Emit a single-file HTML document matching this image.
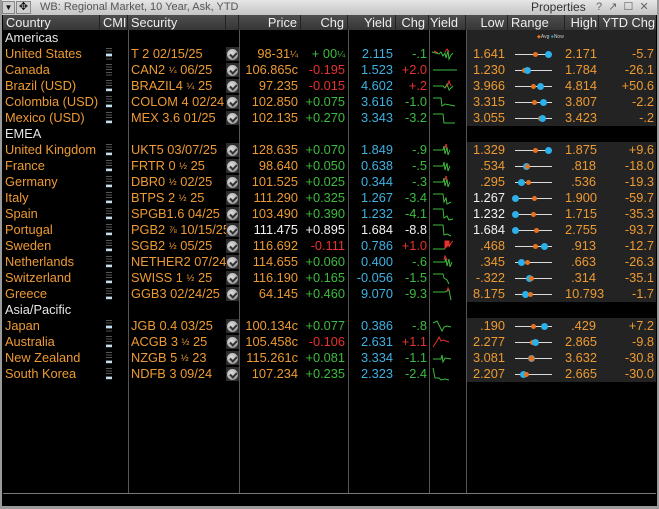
<!DOCTYPE html>
<html><head><meta charset="utf-8"><style>
*{margin:0;padding:0;box-sizing:border-box}
body{width:659px;height:509px;background:#000;overflow:hidden;position:relative;font-family:"Liberation Sans",sans-serif;font-size:12.8px}
.frame{position:absolute;left:0;top:0;width:659px;height:509px;border:2px solid #9a9a9a;border-top:0}
.title{position:absolute;left:0;top:0;width:659px;height:15px;background:linear-gradient(#e6e6e6,#c4c4c4);color:#555;font-size:11px;line-height:15px}
.title .b1{position:absolute;left:2px;top:1px;width:13px;height:13px;background:#cfcfcf;border:1px solid #888;font-size:8px;text-align:center;line-height:11px;color:#111}
.title .b2{position:absolute;left:16px;top:1px;width:15px;height:13px;background:#cfcfcf;border:1px solid #888;font-size:11px;text-align:center;line-height:11px;color:#111}
.hdr{position:absolute;left:3px;top:15px;width:653px;height:15px;background:linear-gradient(#4e4e4e,#363636);}
.h{position:absolute;top:0;height:15px;line-height:15px;color:#eee;border-right:1px solid #222;padding:0 3px;white-space:nowrap}
.r{text-align:right}
.vl{position:absolute;top:30px;height:463px;width:1px;background:#555}
.panel{position:absolute;left:467px;width:189px;background:#232323}
.row{position:absolute;left:3px;width:653px;height:16px;line-height:16px}
.c{position:absolute;top:0;height:16px;white-space:nowrap}
.c f{font-size:9.5px;vertical-align:1px}
.o{color:#ee9a32}.g{color:#3dbb3d}.rd{color:#e8322e}.bl{color:#3fb1e3}.w{color:#f2f2f2}
.grp{color:#e6e6e6;padding-left:2px}
.chk{position:absolute;left:223px;top:1px;width:13px;height:14px;background:#2e2e2e}
.chk:after{content:"";position:absolute;left:1px;top:2px;width:11px;height:11px;border-radius:50%;background:radial-gradient(circle at 40% 35%,#ddd,#888)}
.chk:before{content:"";position:absolute;left:4px;top:5px;width:5px;height:3px;border-left:2px solid #333;border-bottom:2px solid #333;transform:rotate(-45deg);z-index:2}
.cmi{position:absolute;left:103px;top:2px;width:6px;height:13px;background:repeating-linear-gradient(#555 0 1px,#000 1px 2.6px)}
.cmi i{position:absolute;left:0;width:6px;height:2px;background:#bfe0f5}
.rg{position:absolute;left:509px;top:0;width:56px;height:16px}
.rg .ln{position:absolute;left:3px;top:8px;width:37px;height:1px;background:#ddd}
.rg .a{position:absolute;top:6px;width:5px;height:5px;border-radius:50%;background:#e8731e}
.rg .n{position:absolute;top:5px;width:7px;height:7px;border-radius:50%;background:#2bb0ea}
.sp{position:absolute;left:428px;top:0}
</style></head><body>
<div class="title"><div class="b1">▼</div><div class="b2">✥</div><span style="position:absolute;left:40px">WB: Regional Market, 10 Year, Ask, YTD</span><span style="position:absolute;left:531px;color:#333;font-size:12px">Properties</span><span style="position:absolute;left:596px;color:#666">?&nbsp;&nbsp;↗&nbsp;&nbsp;☐&nbsp;&nbsp;✕</span></div>
<div class="hdr">
<div class="h" style="left:0;width:97px">Country</div>
<div class="h" style="left:97px;width:28px">CMI</div>
<div class="h" style="left:125px;width:98px">Security</div>
<div class="h" style="left:223px;width:13px"></div>
<div class="h r" style="left:236px;width:62px">Price</div>
<div class="h r" style="left:298px;width:47px">Chg</div>
<div class="h r" style="left:345px;width:48px">Yield</div>
<div class="h r" style="left:393px;width:33px">Chg</div>
<div class="h" style="left:426px;width:37px;padding:0 1px">Yield</div>
<div class="h r" style="left:463px;width:42px">Low</div>
<div class="h" style="left:505px;width:57px">Range</div>
<div class="h r" style="left:562px;width:34px;padding:0 1px">High</div>
<div class="h r" style="left:596px;width:57px;border:0;padding:0 1px">YTD Chg</div>
</div>
<div class="panel" style="top:30px;height:96px"></div>
<div class="panel" style="top:142px;height:160px"></div>
<div class="panel" style="top:318px;height:64px"></div>
<div class="vl" style="left:128px"></div><div class="vl" style="left:239px"></div><div class="vl" style="left:348px"></div><div class="vl" style="left:429px"></div><div class="vl" style="left:466px"></div>
<div style="position:absolute;left:3px;top:493px;width:653px;height:1px;background:#777"></div>
<div style="position:absolute;left:2px;top:506px;width:655px;height:3px;background:#9a9a9a"></div>
<div style="position:absolute;left:537px;top:34px;font-size:5px;color:#ccc"><span style="color:#e8731e">◆</span>Avg <span style="color:#2bb0ea">●</span>Now</div>

<div class="row" style="top:30px"><span class="grp">Americas</span></div>
<div class="row" style="top:126px"><span class="grp">EMEA</span></div>
<div class="row" style="top:302px"><span class="grp">Asia/Pacific</span></div>

<div class="row" style="top:46px"><span class="c o" style="left:2px">United States</span><div class="cmi"><i style="top:6px"></i></div><span class="c o" style="left:128px">T 2 02/15/25</span><div class="chk"></div><span class="c o r" style="left:236px;width:59px">98-31<f>¼</f></span><span class="c g r" style="left:298px;width:44px">+ 00<f>¼</f></span><span class="c bl r" style="left:345px;width:45px">2.115</span><span class="c g r" style="left:393px;width:31px">-.1</span><svg class="sp" width="36" height="16"><path d="M1 6 L8 8 L10 6 L12 10 L14 7 L15 12 L17 5 L18 13 L20 9 L22 7" stroke="#3dbb3d" fill="none"/><path d="M3 5 L7 7 M14 6 L16 3 L18 6" stroke="#e8322e" fill="none"/></svg><span class="c o r" style="left:463px;width:39px">1.641</span><div class="rg"><div class="ln"></div><div class="a" style="left:21px"></div><div class="n" style="left:33px"></div></div><span class="c o r" style="left:562px;width:31px">2.171</span><span class="c o r" style="left:596px;width:55px">-5.7</span></div>

<div class="row" style="top:62px"><span class="c o" style="left:2px">Canada</span><div class="cmi"></div><span class="c o" style="left:128px">CAN2 <f>¼</f> 06/25</span><div class="chk"></div><span class="c o r" style="left:236px;width:59px">106.865c</span><span class="c rd r" style="left:298px;width:44px">-0.195</span><span class="c bl r" style="left:345px;width:45px">1.523</span><span class="c rd r" style="left:393px;width:31px">+2.0</span><svg class="sp" width="36" height="16"><path d="M2 8 L26 8" stroke="#3dbb3d" fill="none"/></svg><span class="c o r" style="left:463px;width:39px">1.230</span><div class="rg"><div class="ln"></div><div class="a" style="left:10px"></div><div class="n" style="left:12px"></div></div><span class="c o r" style="left:562px;width:31px">1.784</span><span class="c o r" style="left:596px;width:55px">-26.1</span></div>

<div class="row" style="top:78px"><span class="c o" style="left:2px">Brazil (USD)</span><div class="cmi"><i style="top:9px"></i></div><span class="c o" style="left:128px">BRAZIL4 <f>¼</f> 25</span><div class="chk"></div><span class="c o r" style="left:236px;width:59px">97.235</span><span class="c rd r" style="left:298px;width:44px">-0.015</span><span class="c bl r" style="left:345px;width:45px">4.602</span><span class="c rd r" style="left:393px;width:31px">+.2</span><svg class="sp" width="36" height="16"><path d="M2 8 L12 8 L14 10 L16 6 L18 12 L22 8" stroke="#3dbb3d" fill="none"/><path d="M16 9 L18 3 L20 8" stroke="#e8322e" fill="none"/></svg><span class="c o r" style="left:463px;width:39px">3.966</span><div class="rg"><div class="ln"></div><div class="a" style="left:19px"></div><div class="n" style="left:25px"></div></div><span class="c o r" style="left:562px;width:31px">4.814</span><span class="c o r" style="left:596px;width:55px">+50.6</span></div>

<div class="row" style="top:94px"><span class="c o" style="left:2px">Colombia (USD)</span><div class="cmi"><i style="top:9px"></i></div><span class="c o" style="left:128px">COLOM 4 02/24</span><div class="chk"></div><span class="c o r" style="left:236px;width:59px">102.850</span><span class="c g r" style="left:298px;width:44px">+0.075</span><span class="c bl r" style="left:345px;width:45px">3.616</span><span class="c g r" style="left:393px;width:31px">-1.0</span><svg class="sp" width="36" height="16"><path d="M2 4 L10 4 L11 12 L14 10 L24 12" stroke="#3dbb3d" fill="none"/></svg><span class="c o r" style="left:463px;width:39px">3.315</span><div class="rg"><div class="ln"></div><div class="a" style="left:20px"></div><div class="n" style="left:28px"></div></div><span class="c o r" style="left:562px;width:31px">3.807</span><span class="c o r" style="left:596px;width:55px">-2.2</span></div>

<div class="row" style="top:110px"><span class="c o" style="left:2px">Mexico (USD)</span><div class="cmi"><i style="top:9px"></i></div><span class="c o" style="left:128px">MEX 3.6 01/25</span><div class="chk"></div><span class="c o r" style="left:236px;width:59px">102.135</span><span class="c g r" style="left:298px;width:44px">+0.270</span><span class="c bl r" style="left:345px;width:45px">3.343</span><span class="c g r" style="left:393px;width:31px">-3.2</span><svg class="sp" width="36" height="16"><path d="M2 4 L12 4 L13 13 L24 13" stroke="#3dbb3d" fill="none"/></svg><span class="c o r" style="left:463px;width:39px">3.055</span><div class="rg"><div class="ln"></div><div class="a" style="left:26px"></div><div class="n" style="left:27px"></div></div><span class="c o r" style="left:562px;width:31px">3.423</span><span class="c o r" style="left:596px;width:55px">-.2</span></div>

<div class="row" style="top:142px"><span class="c o" style="left:2px">United Kingdom</span><div class="cmi"><i style="top:9px"></i></div><span class="c o" style="left:128px">UKT5 03/07/25</span><div class="chk"></div><span class="c o r" style="left:236px;width:59px">128.635</span><span class="c g r" style="left:298px;width:44px">+0.070</span><span class="c bl r" style="left:345px;width:45px">1.849</span><span class="c g r" style="left:393px;width:31px">-.9</span><svg class="sp" width="36" height="16"><path d="M2 8 L12 8 L13 4 L14 12 L16 5 L17 13 L19 8" stroke="#3dbb3d" fill="none"/><path d="M14 6 L15 2 L16 6" stroke="#e8322e" fill="none"/></svg><span class="c o r" style="left:463px;width:39px">1.329</span><div class="rg"><div class="ln"></div><div class="a" style="left:21px"></div><div class="n" style="left:33px"></div></div><span class="c o r" style="left:562px;width:31px">1.875</span><span class="c o r" style="left:596px;width:55px">+9.6</span></div>

<div class="row" style="top:158px"><span class="c o" style="left:2px">France</span><div class="cmi"><i style="top:9px"></i></div><span class="c o" style="left:128px">FRTR 0 <f>½</f> 25</span><div class="chk"></div><span class="c o r" style="left:236px;width:59px">98.640</span><span class="c g r" style="left:298px;width:44px">+0.050</span><span class="c bl r" style="left:345px;width:45px">0.638</span><span class="c g r" style="left:393px;width:31px">-.5</span><svg class="sp" width="36" height="16"><path d="M2 8 L12 8 L13 4 L14 12 L16 5 L17 13 L19 8" stroke="#3dbb3d" fill="none"/></svg><span class="c o r" style="left:463px;width:39px">.534</span><div class="rg"><div class="ln"></div><div class="n" style="left:11px"></div><div class="a" style="left:13px"></div></div><span class="c o r" style="left:562px;width:31px">.818</span><span class="c o r" style="left:596px;width:55px">-18.0</span></div>

<div class="row" style="top:174px"><span class="c o" style="left:2px">Germany</span><div class="cmi"><i style="top:9px"></i></div><span class="c o" style="left:128px">DBR0 <f>½</f> 02/25</span><div class="chk"></div><span class="c o r" style="left:236px;width:59px">101.525</span><span class="c g r" style="left:298px;width:44px">+0.025</span><span class="c bl r" style="left:345px;width:45px">0.344</span><span class="c g r" style="left:393px;width:31px">-.3</span><svg class="sp" width="36" height="16"><path d="M2 8 L12 8 L13 4 L14 12 L16 5 L17 13 L19 8" stroke="#3dbb3d" fill="none"/><path d="M14 6 L15 2 L16 6" stroke="#e8322e" fill="none"/></svg><span class="c o r" style="left:463px;width:39px">.295</span><div class="rg"><div class="ln"></div><div class="n" style="left:6px"></div><div class="a" style="left:14px"></div></div><span class="c o r" style="left:562px;width:31px">.536</span><span class="c o r" style="left:596px;width:55px">-19.3</span></div>

<div class="row" style="top:190px"><span class="c o" style="left:2px">Italy</span><div class="cmi"><i style="top:9px"></i></div><span class="c o" style="left:128px">BTPS 2 <f>½</f> 25</span><div class="chk"></div><span class="c o r" style="left:236px;width:59px">111.290</span><span class="c g r" style="left:298px;width:44px">+0.325</span><span class="c bl r" style="left:345px;width:45px">1.267</span><span class="c g r" style="left:393px;width:31px">-3.4</span><svg class="sp" width="36" height="16"><path d="M2 4 L12 4 L13 12 L15 8 L16 14 L20 12" stroke="#3dbb3d" fill="none"/></svg><span class="c w r" style="left:463px;width:39px">1.267</span><div class="rg"><div class="ln"></div><div class="n" style="left:0px"></div><div class="a" style="left:20px"></div></div><span class="c o r" style="left:562px;width:31px">1.900</span><span class="c o r" style="left:596px;width:55px">-59.7</span></div>

<div class="row" style="top:206px"><span class="c o" style="left:2px">Spain</span><div class="cmi"><i style="top:9px"></i></div><span class="c o" style="left:128px">SPGB1.6 04/25</span><div class="chk"></div><span class="c o r" style="left:236px;width:59px">103.490</span><span class="c g r" style="left:298px;width:44px">+0.390</span><span class="c bl r" style="left:345px;width:45px">1.232</span><span class="c g r" style="left:393px;width:31px">-4.1</span><svg class="sp" width="36" height="16"><path d="M2 3 L12 3 L13 12 L16 10 L18 14 L22 13" stroke="#3dbb3d" fill="none"/></svg><span class="c w r" style="left:463px;width:39px">1.232</span><div class="rg"><div class="ln"></div><div class="n" style="left:0px"></div><div class="a" style="left:19px"></div></div><span class="c o r" style="left:562px;width:31px">1.715</span><span class="c o r" style="left:596px;width:55px">-35.3</span></div>

<div class="row" style="top:222px"><span class="c o" style="left:2px">Portugal</span><div class="cmi"><i style="top:9px"></i></div><span class="c o" style="left:128px">PGB2 <f>⅞</f> 10/15/25</span><div class="chk"></div><span class="c w r" style="left:236px;width:59px">111.475</span><span class="c w r" style="left:298px;width:44px">+0.895</span><span class="c w r" style="left:345px;width:45px">1.684</span><span class="c w r" style="left:393px;width:31px">-8.8</span><svg class="sp" width="36" height="16"><path d="M2 3 L12 3 L13 13 L16 12 L20 14" stroke="#3dbb3d" fill="none"/></svg><span class="c w r" style="left:463px;width:39px">1.684</span><div class="rg"><div class="ln"></div><div class="n" style="left:0px"></div><div class="a" style="left:22px"></div></div><span class="c o r" style="left:562px;width:31px">2.755</span><span class="c o r" style="left:596px;width:55px">-93.7</span></div>

<div class="row" style="top:238px"><span class="c o" style="left:2px">Sweden</span><div class="cmi"><i style="top:9px"></i></div><span class="c o" style="left:128px">SGB2 <f>½</f> 05/25</span><div class="chk"></div><span class="c o r" style="left:236px;width:59px">116.692</span><span class="c rd r" style="left:298px;width:44px">-0.111</span><span class="c bl r" style="left:345px;width:45px">0.786</span><span class="c rd r" style="left:393px;width:31px">+1.0</span><svg class="sp" width="36" height="16"><path d="M2 11 L14 11" stroke="#3dbb3d" fill="none"/><path d="M14 11 L14 3 L18 3 L18 9 L20 5 L22 3" stroke="#e8322e" fill="#e8322e"/></svg><span class="c o r" style="left:463px;width:39px">.468</span><div class="rg"><div class="ln"></div><div class="a" style="left:21px"></div><div class="n" style="left:29px"></div></div><span class="c o r" style="left:562px;width:31px">.913</span><span class="c o r" style="left:596px;width:55px">-12.7</span></div>

<div class="row" style="top:254px"><span class="c o" style="left:2px">Netherlands</span><div class="cmi"><i style="top:9px"></i></div><span class="c o" style="left:128px">NETHER2 07/24</span><div class="chk"></div><span class="c o r" style="left:236px;width:59px">114.655</span><span class="c g r" style="left:298px;width:44px">+0.060</span><span class="c bl r" style="left:345px;width:45px">0.400</span><span class="c g r" style="left:393px;width:31px">-.6</span><svg class="sp" width="36" height="16"><path d="M2 8 L14 8 L15 4 L16 12 L18 5 L19 13 L21 8" stroke="#3dbb3d" fill="none"/><path d="M13 6 L14 2 L16 6" stroke="#e8322e" fill="none"/></svg><span class="c o r" style="left:463px;width:39px">.345</span><div class="rg"><div class="ln"></div><div class="n" style="left:6px"></div><div class="a" style="left:13px"></div></div><span class="c o r" style="left:562px;width:31px">.663</span><span class="c o r" style="left:596px;width:55px">-26.3</span></div>

<div class="row" style="top:270px"><span class="c o" style="left:2px">Switzerland</span><div class="cmi"><i style="top:9px"></i></div><span class="c o" style="left:128px">SWISS 1 <f>½</f> 25</span><div class="chk"></div><span class="c o r" style="left:236px;width:59px">116.190</span><span class="c g r" style="left:298px;width:44px">+0.165</span><span class="c bl r" style="left:345px;width:45px">-0.056</span><span class="c g r" style="left:393px;width:31px">-1.5</span><svg class="sp" width="36" height="16"><path d="M2 4 L12 4 L13 8 L16 10 L18 14" stroke="#3dbb3d" fill="none"/></svg><span class="c o r" style="left:463px;width:39px">-.322</span><div class="rg"><div class="ln"></div><div class="n" style="left:14px"></div><div class="a" style="left:17px"></div></div><span class="c o r" style="left:562px;width:31px">.314</span><span class="c o r" style="left:596px;width:55px">-35.1</span></div>

<div class="row" style="top:286px"><span class="c o" style="left:2px">Greece</span><div class="cmi"><i style="top:9px"></i></div><span class="c o" style="left:128px">GGB3 02/24/25</span><div class="chk"></div><span class="c o r" style="left:236px;width:59px">64.145</span><span class="c g r" style="left:298px;width:44px">+0.460</span><span class="c bl r" style="left:345px;width:45px">9.070</span><span class="c g r" style="left:393px;width:31px">-9.3</span><svg class="sp" width="36" height="16"><path d="M2 6 L14 6 L18 4 L20 14" stroke="#3dbb3d" fill="none"/><path d="M16 5 L17 2 L18 5" stroke="#e8322e" fill="none"/></svg><span class="c o r" style="left:463px;width:39px">8.175</span><div class="rg"><div class="ln"></div><div class="n" style="left:10px"></div><div class="a" style="left:16px"></div></div><span class="c o r" style="left:562px;width:31px">10.793</span><span class="c o r" style="left:596px;width:55px">-1.7</span></div>

<div class="row" style="top:318px"><span class="c o" style="left:2px">Japan</span><div class="cmi"><i style="top:6px"></i></div><span class="c o" style="left:128px">JGB 0.4 03/25</span><div class="chk"></div><span class="c o r" style="left:236px;width:59px">100.134c</span><span class="c g r" style="left:298px;width:44px">+0.077</span><span class="c bl r" style="left:345px;width:45px">0.386</span><span class="c g r" style="left:393px;width:31px">-.8</span><svg class="sp" width="36" height="16"><path d="M2 5 L6 3 L9 9 L11 13 L13 9 L16 8 L20 9" stroke="#3dbb3d" fill="none"/></svg><span class="c o r" style="left:463px;width:39px">.190</span><div class="rg"><div class="ln"></div><div class="a" style="left:19px"></div><div class="n" style="left:29px"></div></div><span class="c o r" style="left:562px;width:31px">.429</span><span class="c o r" style="left:596px;width:55px">+7.2</span></div>

<div class="row" style="top:334px"><span class="c o" style="left:2px">Australia</span><div class="cmi"><i style="top:9px"></i></div><span class="c o" style="left:128px">ACGB 3 <f>½</f> 25</span><div class="chk"></div><span class="c o r" style="left:236px;width:59px">105.458c</span><span class="c rd r" style="left:298px;width:44px">-0.106</span><span class="c bl r" style="left:345px;width:45px">2.631</span><span class="c rd r" style="left:393px;width:31px">+1.1</span><svg class="sp" width="36" height="16"><path d="M2 13 L4 10 L6 7 L8 3 L10 7 L12 6 L18 8" stroke="#e8322e" fill="none"/></svg><span class="c o r" style="left:463px;width:39px">2.277</span><div class="rg"><div class="ln"></div><div class="a" style="left:18px"></div><div class="n" style="left:20px"></div></div><span class="c o r" style="left:562px;width:31px">2.865</span><span class="c o r" style="left:596px;width:55px">-9.8</span></div>

<div class="row" style="top:350px"><span class="c o" style="left:2px">New Zealand</span><div class="cmi"><i style="top:9px"></i></div><span class="c o" style="left:128px">NZGB 5 <f>½</f> 23</span><div class="chk"></div><span class="c o r" style="left:236px;width:59px">115.261c</span><span class="c g r" style="left:298px;width:44px">+0.081</span><span class="c bl r" style="left:345px;width:45px">3.334</span><span class="c g r" style="left:393px;width:31px">-1.1</span><svg class="sp" width="36" height="16"><path d="M2 9 L10 9 L11 5 L12 12 L14 8 L20 9" stroke="#3dbb3d" fill="none"/></svg><span class="c o r" style="left:463px;width:39px">3.081</span><div class="rg"><div class="ln"></div><div class="n" style="left:16px;background:#8a8a8a"></div><div class="a" style="left:17px"></div></div><span class="c o r" style="left:562px;width:31px">3.632</span><span class="c o r" style="left:596px;width:55px">-30.8</span></div>

<div class="row" style="top:366px"><span class="c o" style="left:2px">South Korea</span><div class="cmi"><i style="top:9px"></i></div><span class="c o" style="left:128px">NDFB 3 09/24</span><div class="chk"></div><span class="c o r" style="left:236px;width:59px">107.234</span><span class="c g r" style="left:298px;width:44px">+0.235</span><span class="c bl r" style="left:345px;width:45px">2.323</span><span class="c g r" style="left:393px;width:31px">-2.4</span><svg class="sp" width="36" height="16"><path d="M2 2 L4 12 L8 12 L10 14 L14 13 L18 14" stroke="#3dbb3d" fill="none"/></svg><span class="c o r" style="left:463px;width:39px">2.207</span><div class="rg"><div class="ln"></div><div class="n" style="left:8px"></div><div class="a" style="left:12px"></div></div><span class="c o r" style="left:562px;width:31px">2.665</span><span class="c o r" style="left:596px;width:55px">-30.0</span></div>

<div class="frame"></div>
</body></html>
